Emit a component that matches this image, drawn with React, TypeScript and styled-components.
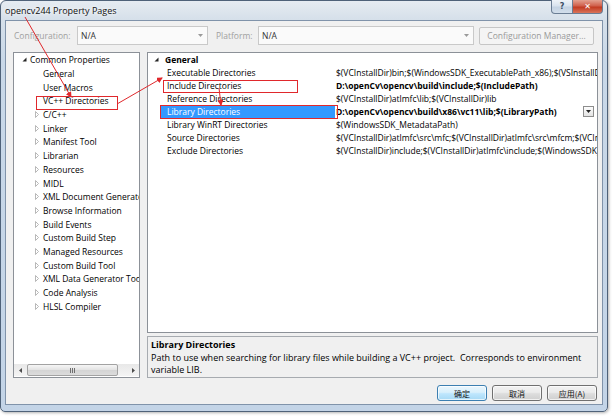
import React from "react";
import styled, { createGlobalStyle } from "styled-components";

const UI = `"Open Sans", "Noto Sans", "Noto Sans CJK SC", sans-serif`;
const CJK = `"Noto Sans CJK SC", "Open Sans", sans-serif`;

const GlobalStyle = createGlobalStyle`
  html, body { margin: 0; padding: 0; background: #ffffff; }
  body { font-family: ${UI}; font-size: 8.5px; color: #000; }
  #root { width: 612px; height: 417px; position: relative; overflow: hidden; }
`;

const Window = styled.div`
  box-sizing: border-box;
  width: 608px;
  height: 412px;
  border: 1px solid #4f6279;
  border-radius: 6px 6px 5px 5px;
  background: linear-gradient(180deg, #e6ecf2 0px, #d6e0ea 18px, #c9d8e8 60px, #c3d4e7 100%);
  display: flex;
  flex-direction: column;
  padding: 0 4px 6px 4px;
  box-shadow: 1px 1px 3px rgba(0, 0, 0, 0.3);
`;

const TitleBar = styled.div`
  height: 19px;
  display: flex;
  align-items: flex-start;
`;

const TitleText = styled.div`
  padding-top: 3px;
  font-size: 9px;
  color: #111;
  text-shadow: 0 0 6px #fff, 0 0 3px #fff;
  flex: 1;
`;

const CaptionButtons = styled.div`
  display: flex;
  margin-top: -1px;
`;

const CaptionButton = styled.div<{ $close?: boolean }>`
  box-sizing: border-box;
  width: ${(p) => (p.$close ? 30 : 22)}px;
  height: 14px;
  border: 1px solid #6a7d94;
  border-top: none;
  border-left: ${(p) => (p.$close ? "none" : "1px solid #6a7d94")};
  border-radius: ${(p) => (p.$close ? "0 0 4px 0" : "0 0 0 4px")};
  background: ${(p) =>
    p.$close
      ? "linear-gradient(180deg, #e3a190 0%, #d0604c 45%, #c23b22 55%, #d9745a 100%)"
      : "linear-gradient(180deg, #eef3f8 0%, #d9e3ee 45%, #c4d3e3 55%, #d2deeb 100%)"};
  display: flex;
  align-items: center;
  justify-content: center;
  color: ${(p) => (p.$close ? "#fff" : "#3b4d63")};
  font-family: "DejaVu Sans", sans-serif;
  font-size: 8px;
  font-weight: bold;
`;

const Client = styled.div`
  flex: 1;
  box-sizing: border-box;
  background: #f0f0f0;
  border: 1px solid #8093aa;
  display: flex;
  flex-direction: column;
  padding: 5px 4px 3px 7px;
`;

const ConfigRow = styled.div`
  display: flex;
  align-items: center;
  height: 19px;
`;

const ConfigLabel = styled.div<{ $w: number; $ml?: number }>`
  width: ${(p) => p.$w}px;
  margin-left: ${(p) => p.$ml ?? 0}px;
  color: #a0a0a0;
  white-space: nowrap;
`;

const Combo = styled.div<{ $w: number }>`
  box-sizing: border-box;
  width: ${(p) => p.$w}px;
  height: 19px;
  border: 1px solid #c9c9c9;
  background: #fafafa;
  display: flex;
  align-items: center;
  padding: 0 4px 0 3px;
  color: #333;
`;

const ComboText = styled.span`
  flex: 1;
`;

const Manager = styled.div`
  box-sizing: border-box;
  width: 115px;
  height: 18px;
  margin-left: 5px;
  border: 1px solid #c6c6c6;
  border-radius: 2px;
  background: #f4f4f4;
  color: #9a9a9a;
  display: flex;
  align-items: center;
  justify-content: center;
`;

const Body = styled.div`
  margin-top: 7px;
  height: 326px;
  display: grid;
  grid-template-columns: 127px 1fr;
  column-gap: 7px;
`;

const TreePanel = styled.div`
  box-sizing: border-box;
  border: 1px solid #8c9198;
  background: #fff;
  display: flex;
  flex-direction: column;
`;

const TreeList = styled.div`
  flex: 1;
  overflow: hidden;
`;

const TreeRow = styled.div<{ $level: number }>`
  height: 13.7px;
  display: flex;
  align-items: center;
  padding-left: ${(p) => (p.$level === 0 ? 8 : 21)}px;
  white-space: nowrap;
  overflow: hidden;
`;

const Expander = styled.span`
  width: 8px;
  flex: none;
  display: flex;
  align-items: center;
`;

const HScroll = styled.div`
  height: 12px;
  margin: 0 0 1px 0;
  display: flex;
  align-items: stretch;
  background: linear-gradient(180deg, #e8e8e8, #f4f4f4);
`;

const ScrollArrow = styled.div`
  width: 12px;
  display: flex;
  align-items: center;
  justify-content: center;
`;

const ScrollTrack = styled.div`
  flex: 1;
  display: flex;
  padding: 0 1px;
`;

const Thumb = styled.div`
  box-sizing: border-box;
  width: 91px;
  border: 1px solid #a2a2a2;
  border-radius: 2px;
  background: linear-gradient(180deg, #f6f6f6 0%, #e2e2e2 50%, #d4d4d4 51%, #dcdcdc 100%);
  display: flex;
  align-items: center;
  justify-content: center;
  gap: 1px;
`;

const Grip = styled.span`
  width: 1px;
  height: 5px;
  background: #6f6f6f;
`;

const RightCol = styled.div`
  display: flex;
  flex-direction: column;
  gap: 3px;
  min-width: 0;
`;

const GridPanel = styled.div`
  flex: 1;
  box-sizing: border-box;
  border: 1px solid #8c9198;
  background: #fff;
  overflow: hidden;
`;

const CategoryRow = styled.div`
  height: 13px;
  display: flex;
  align-items: center;
  padding-left: 6px;
  font-weight: bold;
  gap: 6px;
`;

const PropRow = styled.div`
  height: 13px;
  display: grid;
  grid-template-columns: 12px 175px 1fr;
  align-items: stretch;
`;

const NameCell = styled.div<{ $sel?: boolean }>`
  display: flex;
  align-items: center;
  padding-left: 6px;
  margin-left: 1px;
  background: ${(p) => (p.$sel ? "#3399ff" : "transparent")};
  color: ${(p) => (p.$sel ? "#fff" : "#000")};
  white-space: nowrap;
  overflow: hidden;
`;

const ValueCell = styled.div<{ $bold?: boolean }>`
  display: flex;
  align-items: center;
  padding-left: 1px;
  font-weight: ${(p) => (p.$bold ? "bold" : "normal")};
  white-space: nowrap;
  overflow: hidden;
  min-width: 0;
`;

const ValueText = styled.span`
  flex: 1;
  overflow: hidden;
`;

const DropBtn = styled.div`
  box-sizing: border-box;
  flex: none;
  width: 11px;
  height: 11px;
  margin-right: 3px;
  border: 1px solid #8d8d8d;
  background: linear-gradient(180deg, #fdfdfd, #e3e3e3);
  display: flex;
  align-items: center;
  justify-content: center;
`;

const DescPanel = styled.div`
  box-sizing: border-box;
  height: 42px;
  border: 1px solid #a7abb0;
  background: #f0f0f0;
  padding: 2px 3px 0 3px;
  line-height: 12.5px;
  font-size: 9px;
`;

const DescTitle = styled.div`
  font-weight: bold;
`;

const ButtonRow = styled.div`
  margin-top: 7px;
  height: 16px;
  display: flex;
  justify-content: flex-end;
  gap: 5px;
  padding-right: 1px;
`;

const DlgButton = styled.div<{ $default?: boolean }>`
  box-sizing: border-box;
  width: 50px;
  height: 16px;
  border: 1px solid ${(p) => (p.$default ? "#3c7fb1" : "#707070")};
  border-radius: 3px;
  background: ${(p) =>
    p.$default
      ? "linear-gradient(180deg, #eaf6fd 0%, #d9f0fc 45%, #bee6fd 55%, #a7d9f5 100%)"
      : "linear-gradient(180deg, #f2f2f2 0%, #ebebeb 45%, #dddddd 55%, #cfcfcf 100%)"};
  box-shadow: inset 0 0 0 1px rgba(255, 255, 255, 0.7);
  font-family: ${CJK};
  font-size: 8px;
  display: flex;
  align-items: center;
  justify-content: center;
  color: #111;
`;

const Overlay = styled.svg`
  position: absolute;
  left: 0;
  top: 0;
  width: 612px;
  height: 417px;
  pointer-events: none;
`;

const ExpandedIcon = () => (
  <svg width="5" height="5" viewBox="0 0 5 5">
    <path d="M4.5 0.5 L4.5 4.5 L0.5 4.5 Z" fill="#262626" />
  </svg>
);

const CollapsedIcon = () => (
  <svg width="4" height="7" viewBox="0 0 4 7">
    <path d="M0.5 0.5 L3.5 3.5 L0.5 6.5 Z" fill="#fff" stroke="#a6a6a6" strokeWidth="0.8" />
  </svg>
);

const ComboArrow = ({ color = "#9a9a9a" }: { color?: string }) => (
  <svg width="5" height="3" viewBox="0 0 5 3">
    <path d="M0 0 L5 0 L2.5 3 Z" fill={color} />
  </svg>
);

const SmallArrow = ({ dir }: { dir: "left" | "right" }) => (
  <svg width="3" height="5" viewBox="0 0 3 5">
    <path d={dir === "left" ? "M3 0 L0 2.5 L3 5 Z" : "M0 0 L3 2.5 L0 5 Z"} fill="#4d4d4d" />
  </svg>
);

const treeItems: { label: string; level: number; expandable?: boolean }[] = [
  { label: "Common Properties", level: 0 },
  { label: "General", level: 1 },
  { label: "User Macros", level: 1 },
  { label: "VC++ Directories", level: 1 },
  { label: "C/C++", level: 1, expandable: true },
  { label: "Linker", level: 1, expandable: true },
  { label: "Manifest Tool", level: 1, expandable: true },
  { label: "Librarian", level: 1, expandable: true },
  { label: "Resources", level: 1, expandable: true },
  { label: "MIDL", level: 1, expandable: true },
  { label: "XML Document Generator Tool", level: 1, expandable: true },
  { label: "Browse Information", level: 1, expandable: true },
  { label: "Build Events", level: 1, expandable: true },
  { label: "Custom Build Step", level: 1, expandable: true },
  { label: "Managed Resources", level: 1, expandable: true },
  { label: "Custom Build Tool", level: 1, expandable: true },
  { label: "XML Data Generator Tool", level: 1, expandable: true },
  { label: "Code Analysis", level: 1, expandable: true },
  { label: "HLSL Compiler", level: 1, expandable: true },
];

const props: { name: string; value: string; bold?: boolean; sel?: boolean }[] = [
  {
    name: "Executable Directories",
    value: "$(VCInstallDir)bin;$(WindowsSDK_ExecutablePath_x86);$(VSInstallDir)Common7\\Tools\\bin;$(VSInstallDir)Common7\\tools;$(VSInstallDir)Common7\\ide",
  },
  { name: "Include Directories", value: "D:\\openCv\\opencv\\build\\include;$(IncludePath)", bold: true },
  { name: "Reference Directories", value: "$(VCInstallDir)atlmfc\\lib;$(VCInstallDir)lib" },
  { name: "Library Directories", value: "D:\\openCv\\opencv\\build\\x86\\vc11\\lib;$(LibraryPath)", bold: true, sel: true },
  { name: "Library WinRT Directories", value: "$(WindowsSDK_MetadataPath)" },
  {
    name: "Source Directories",
    value: "$(VCInstallDir)atlmfc\\src\\mfc;$(VCInstallDir)atlmfc\\src\\mfcm;$(VCInstallDir)atlmfc\\src\\atl;$(VCInstallDir)crt\\src",
  },
  {
    name: "Exclude Directories",
    value: "$(VCInstallDir)include;$(VCInstallDir)atlmfc\\include;$(WindowsSDK_IncludePath);$(MSBuildToolsPath32)",
  },
];

export default function App() {
  return (
    <>
      <GlobalStyle />
      <Window>
        <TitleBar>
          <TitleText>opencv244 Property Pages</TitleText>
          <CaptionButtons>
            <CaptionButton>?</CaptionButton>
            <CaptionButton $close>✕</CaptionButton>
          </CaptionButtons>
        </TitleBar>
        <Client>
          <ConfigRow>
            <ConfigLabel $w={63} $ml={1}>Configuration:</ConfigLabel>
            <Combo $w={131}>
              <ComboText>N/A</ComboText>
              <ComboArrow />
            </Combo>
            <ConfigLabel $w={42} $ml={8}>Platform:</ConfigLabel>
            <Combo $w={216}>
              <ComboText>N/A</ComboText>
              <ComboArrow />
            </Combo>
            <Manager>Configuration Manager...</Manager>
          </ConfigRow>
          <Body>
            <TreePanel>
              <TreeList>
                {treeItems.map((t) => (
                  <TreeRow key={t.label} $level={t.level}>
                    <Expander>
                      {t.level === 0 ? <ExpandedIcon /> : t.expandable ? <CollapsedIcon /> : null}
                    </Expander>
                    {t.label}
                  </TreeRow>
                ))}
              </TreeList>
              <HScroll>
                <ScrollArrow>
                  <SmallArrow dir="left" />
                </ScrollArrow>
                <ScrollTrack>
                  <Thumb>
                    <Grip />
                    <Grip />
                    <Grip />
                  </Thumb>
                </ScrollTrack>
                <ScrollArrow>
                  <SmallArrow dir="right" />
                </ScrollArrow>
              </HScroll>
            </TreePanel>
            <RightCol>
              <GridPanel>
                <CategoryRow>
                  <ExpandedIcon />
                  General
                </CategoryRow>
                {props.map((p) => (
                  <PropRow key={p.name}>
                    <span />
                    <NameCell $sel={p.sel}>{p.name}</NameCell>
                    <ValueCell $bold={p.bold}>
                      <ValueText>{p.value}</ValueText>
                      {p.sel && (
                        <DropBtn>
                          <ComboArrow color="#222" />
                        </DropBtn>
                      )}
                    </ValueCell>
                  </PropRow>
                ))}
              </GridPanel>
              <DescPanel>
                <DescTitle>Library Directories</DescTitle>
                Path to use when searching for library files while building a VC++ project.&nbsp; Corresponds to
                environment variable LIB.
              </DescPanel>
            </RightCol>
          </Body>
          <ButtonRow>
            <DlgButton $default>确定</DlgButton>
            <DlgButton>取消</DlgButton>
            <DlgButton>应用(A)</DlgButton>
          </ButtonRow>
        </Client>
      </Window>
      <Overlay viewBox="0 0 612 417">
        <defs>
          <marker id="ah" markerWidth="6" markerHeight="6" refX="5" refY="3" orient="auto" markerUnits="userSpaceOnUse">
            <path d="M0 0 L6 3 L0 6 Z" fill="#e0282c" />
          </marker>
        </defs>
        <g stroke="#e0282c" strokeWidth="1" fill="none">
          <line x1="25" y1="17" x2="71" y2="97" markerEnd="url(#ah)" />
          <rect x="36.5" y="96.5" width="81" height="13" />
          <line x1="117" y1="104" x2="162" y2="78" markerEnd="url(#ah)" />
          <rect x="163.5" y="80.5" width="134" height="12" />
          <line x1="219" y1="88" x2="221" y2="105" markerEnd="url(#ah)" />
          <rect x="160.5" y="105.5" width="177" height="13" />
        </g>
      </Overlay>
    </>
  );
}
